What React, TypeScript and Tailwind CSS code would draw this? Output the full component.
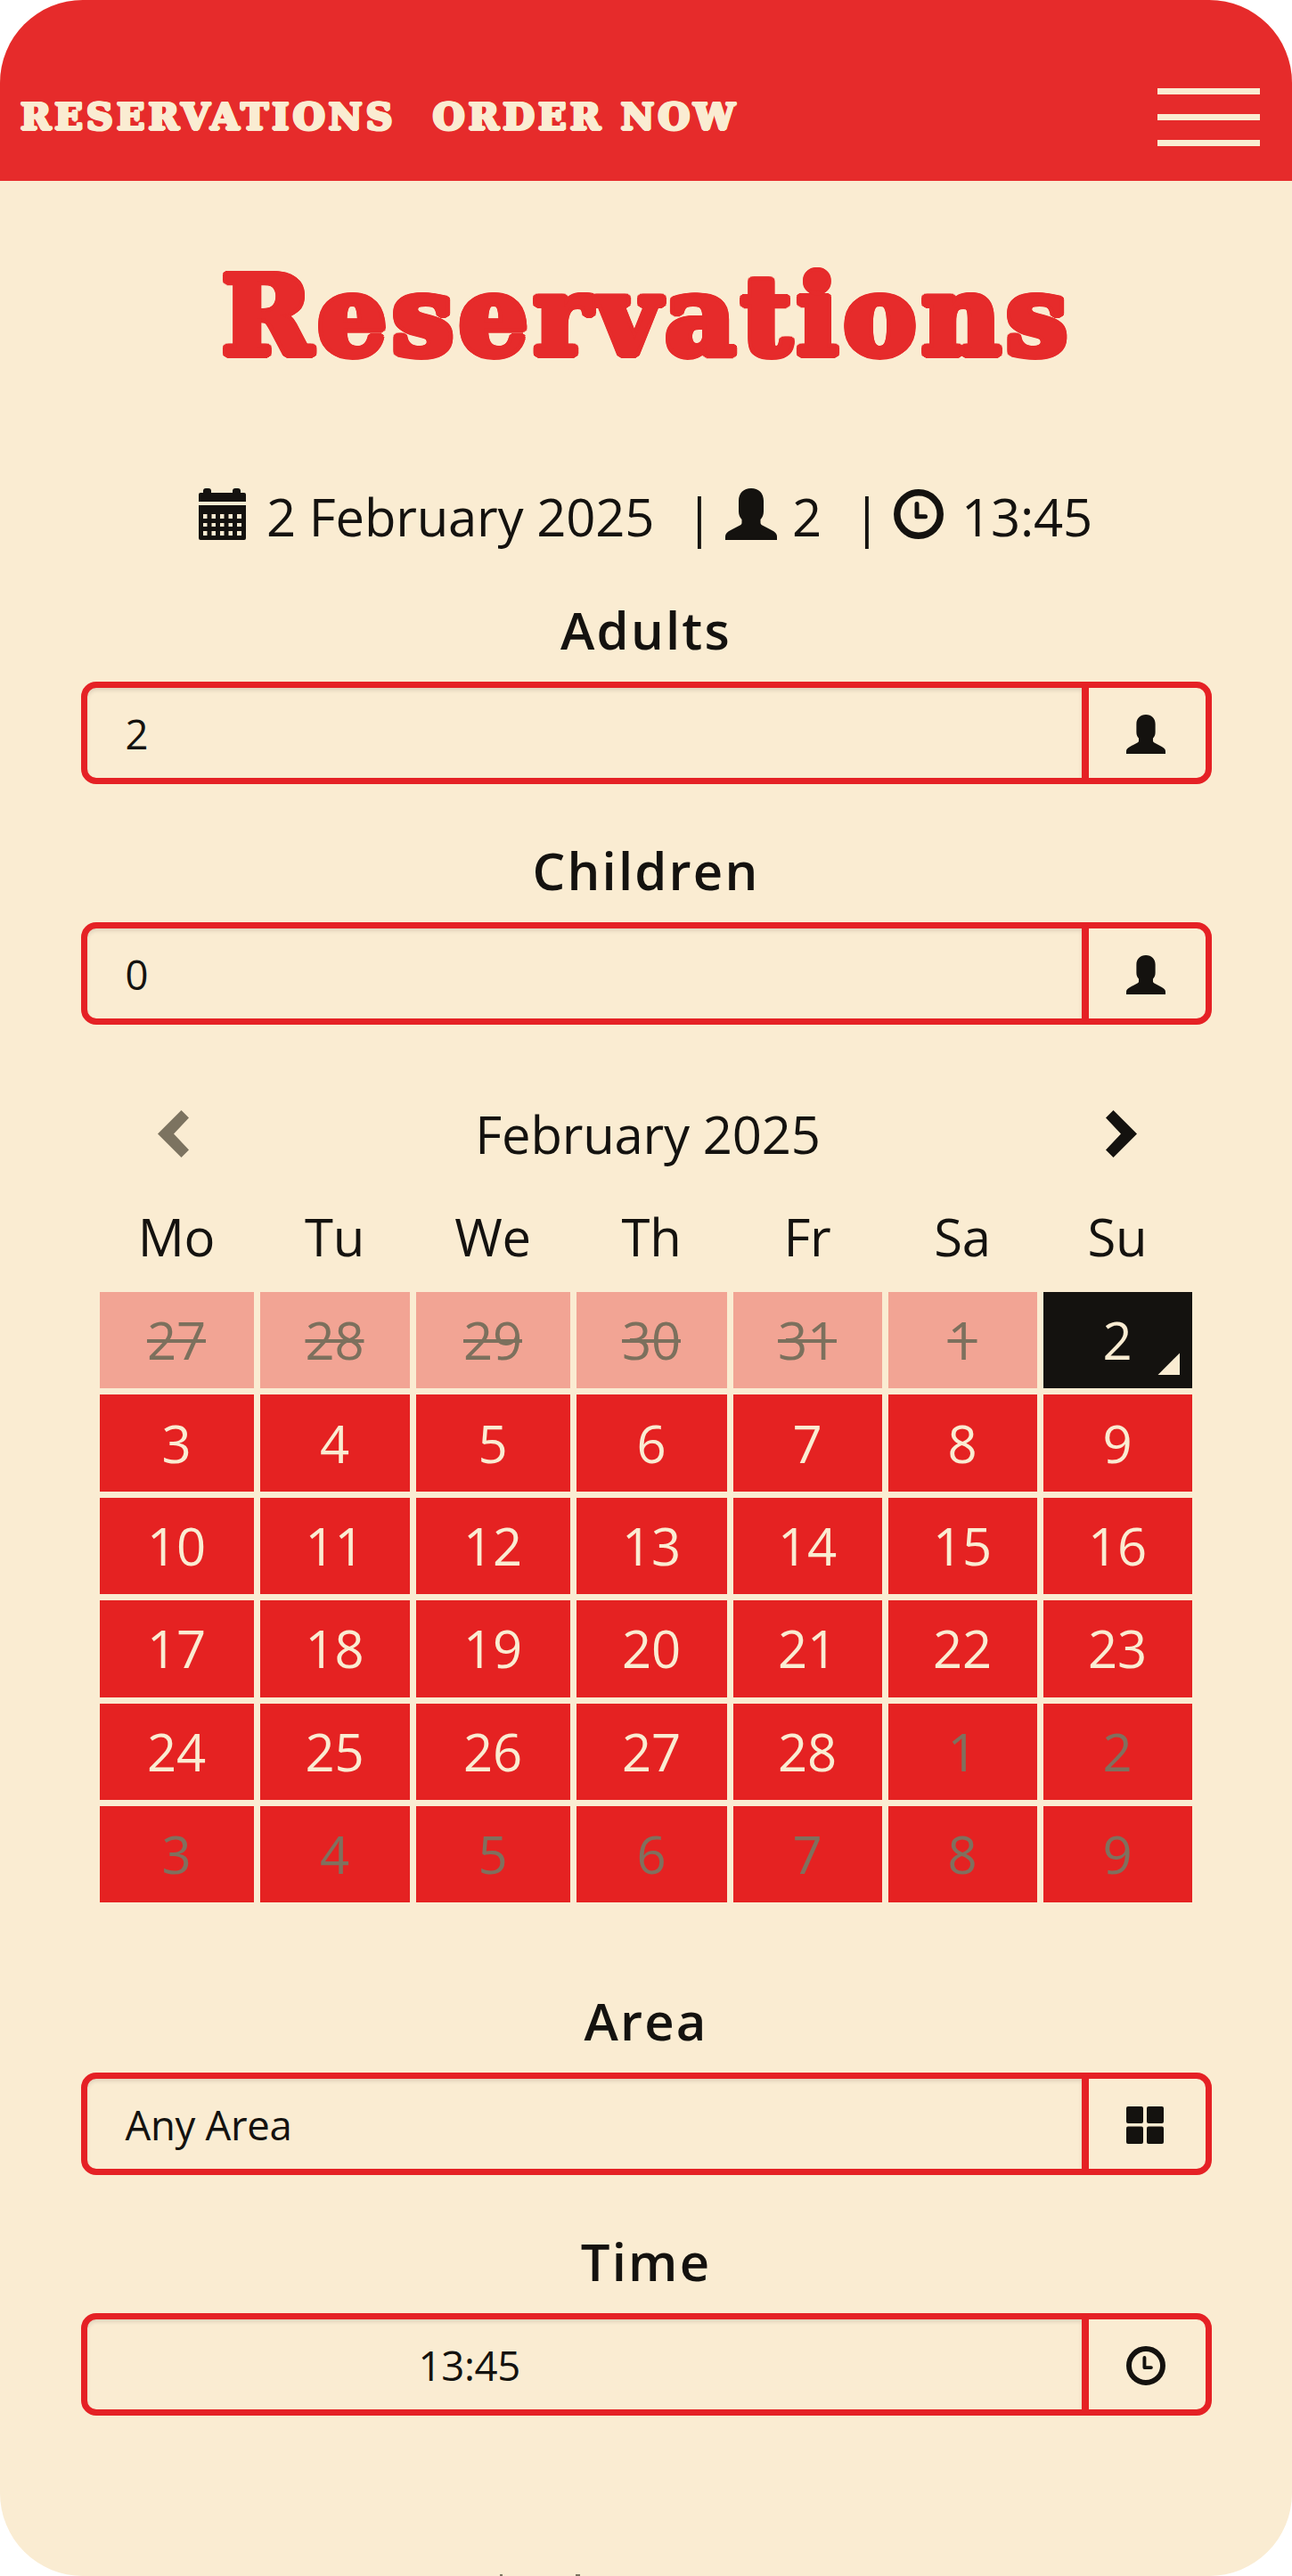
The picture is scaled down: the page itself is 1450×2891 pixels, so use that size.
import { ReactNode } from "react"

type IconProps = { className?: string }

const CalendarIcon = ({ className }: IconProps) => (
  <svg viewBox="0 0 53 58" className={className} fill="currentColor" fillRule="evenodd">
    <path d="M0 15V7a2 2 0 0 1 2-2h3V3a3 3 0 0 1 3-3h3a3 3 0 0 1 3 3v2h24V3a3 3 0 0 1 3-3h3a3 3 0 0 1 3 3v2h4a2 2 0 0 1 2 2v8z" />
    <path d="M0 19h53v37a2 2 0 0 1-2 2H2a2 2 0 0 1-2-2zM5 29v5h4.500v-5zm9.500 0v5h4.500v-5zm9.500 0v5h4.500v-5zm9.500 0v5h4.500v-5zm9.500 0v5h5v-5zM5 39v4h4.500v-4zm9.500 0v4h4.500v-4zm9.500 0v4h4.500v-4zm9.500 0v4h4.500v-4zm9.500 0v4h5v-4zM5 48v5h4.500v-5zm9.500 0v5h4.500v-5zm9.500 0v5h4.500v-5zm9.500 0v5h4.500v-5zm9.500 0v5h5v-5z" />
  </svg>
)

const UserIcon = ({ className }: IconProps) => (
  <svg viewBox="0 0 58 58" className={className} fill="currentColor">
    <path d="M29 0c8.500 0 14 5.500 14 14v12c0 4-1.500 7-3.500 9v3.500c0 1.500.7 2.300 2 3l10.500 5.500c4 2.200 6 4 6 7v4H0v-4c0-3 2-4.800 6-7l10.500-5.500c1.500-.8 2-1.500 2-3V35c-2-2-3.500-5-3.500-9V14C15 5.500 20.500 0 29 0z" />
  </svg>
)

const ClockIcon = ({ className }: IconProps) => (
  <svg viewBox="0 0 56 56" className={className} fill="none" stroke="currentColor">
    <circle cx="28" cy="28" r="24.200" strokeWidth="7.500" />
    <path d="M26 16.500v14.200h9.500" strokeWidth="5" strokeLinecap="round" strokeLinejoin="round" />
  </svg>
)

const GridIcon = ({ className }: IconProps) => (
  <svg viewBox="0 0 42 42" className={className} fill="currentColor">
    <rect width="19" height="19" rx="2" />
    <rect x="23" width="19" height="19" rx="2" />
    <rect y="22.500" width="19" height="19.500" rx="2" />
    <rect x="23" y="22.500" width="19" height="19.500" rx="2" />
  </svg>
)

const ChevronIcon = ({ className }: IconProps) => (
  <svg viewBox="0 0 35 53" className={className} fill="currentColor">
    <path d="M8.500 0 35 26.500 8.500 53 0 44.500 17 26.500 0 8.500z" />
  </svg>
)

type FieldProps = {
  label: string
  value: string
  icon: ReactNode
  valueClass?: string
}

const Field = ({ label, value, icon, valueClass = "pl-[43px]" }: FieldProps) => (
  <div className="w-[1269px] h-[209px] flex flex-col">
    <h2 className="h-[94px] leading-[71px] text-center text-[58px] font-semibold tracking-[2.200px]">{label}</h2>
    <div className="h-[115px] flex rounded-[17px] border-[7px] border-[#e52125] text-[45.500px] tracking-[-0.300px]">
      <div className={`flex-1 flex items-center pt-px rounded-l-[10px] shadow-[inset_0_3px_4px_rgba(0,0,0,0.1)] ${valueClass}`}>
        {value}
      </div>
      <div className="w-[139px] border-l-8 border-[#e52125] pl-[42px] pt-[3px] flex items-center">{icon}</div>
    </div>
  </div>
)

const weekDays = ["Mo", "Tu", "We", "Th", "Fr", "Sa", "Su"]

const weeks = [
  [27, 28, 29, 30, 31, 1, 2],
  [3, 4, 5, 6, 7, 8, 9],
  [10, 11, 12, 13, 14, 15, 16],
  [17, 18, 19, 20, 21, 22, 23],
  [24, 25, 26, 27, 28, 1, 2],
  [3, 4, 5, 6, 7, 8, 9],
]

const columns = "grid grid-cols-[173px_168px_173px_169px_167px_167px_167px] gap-x-[7px]"

const dayClass = (week: number, day: number) => {
  if (week === 0 && day === 6) return "bg-[#14120f] text-[#faecd2]"
  if (week === 0) return "bg-[#f2a494] text-[#7c705d] line-through decoration-[4px]"
  if (week === 5 || (week === 4 && day > 4)) return "bg-[#e52222] text-[#80705e]"
  return "bg-[#e52222] text-[#faecd2]"
}

const Calendar = () => (
  <div className="w-[1226px] text-[58px] tracking-[-0.200px]">
    <div className="h-[108px] flex items-center justify-between pl-[65px] pr-[62px]">
      <ChevronIcon className="w-[35px] h-[53px] rotate-180 text-[#7c7360]" />
      <span className="pl-px">February 2025</span>
      <ChevronIcon className="w-[35px] h-[53px]" />
    </div>
    <div className={`${columns} h-[124px] leading-[124px] text-center`}>
      {weekDays.map((day) => (
        <div key={day} className="pr-px">{day}</div>
      ))}
    </div>
    <div className="flex flex-col gap-[7px]">
      {weeks.map((week, w) => (
        <div key={w} className={columns}>
          {week.map((day, d) => (
            <div key={d} className={`relative h-[108.400px] pr-px pb-px flex items-center justify-center ${dayClass(w, d)}`}>
              {day}
              {w === 0 && d === 6 && (
                <span className="absolute right-[14px] bottom-[15px] size-[25px] bg-[#faecd2] [clip-path:polygon(100%_0,100%_100%,0_100%)]" />
              )}
            </div>
          ))}
        </div>
      ))}
    </div>
  </div>
)

const NavBar = () => (
  <header className="h-[203px] bg-[#e62b2b] text-[#faecd2] flex justify-between pl-[23px] pr-9">
    {/* the shadows fatten the serif and round off its corners */}
    <nav className="flex gap-[41px] pt-[105px] text-[41px] leading-[53px] font-bold font-['DejaVu_Serif',serif] tracking-[4.350px] [text-shadow:1.8px_0,-1.8px_0,0_1.5px,0_-1.5px,1.3px_1.3px,-1.3px_1.3px,1.3px_-1.3px,-1.3px_-1.3px]">
      <a>RESERVATIONS</a>
      <a>ORDER NOW</a>
    </nav>
    <button className="mt-[99px] w-[115px] h-[65px] flex flex-col justify-between">
      <span className="w-full h-[7px] bg-[#faecd2]" />
      <span className="w-full h-[7px] bg-[#faecd2]" />
      <span className="w-full h-[7px] bg-[#faecd2]" />
    </button>
  </header>
)

const App = () => {
  return (
    <div className="w-[1450px] h-[2891px] overflow-hidden rounded-[93px] bg-[#faecd2] text-[#14120f] font-['Open_Sans',sans-serif]">
      <NavBar />
      <main className="flex flex-col items-center">
        <h1 className="mt-[71px] pl-[3px] h-[160px] leading-[160px] text-[122px] font-bold font-['DejaVu_Serif',serif] text-[#e62b2b] tracking-[6.200px] [text-shadow:4.5px_0,-4.5px_0,0_4.5px,0_-4.5px,3.2px_3.2px,-3.2px_3.2px,3.2px_-3.2px,-3.2px_-3.2px,4.2px_1.7px,-4.2px_1.7px,4.2px_-1.7px,-4.2px_-1.7px,1.7px_4.2px,-1.7px_4.2px,1.7px_-4.2px,-1.7px_-4.2px]">
          Reservations
        </h1>

        {/* Booking summary */}
        <div className="mt-[106px] self-start ml-[223px] h-[80px] flex items-center text-[58px] leading-[80px] tracking-[-0.200px] whitespace-pre">
          <CalendarIcon className="w-[53px] h-[58px] mb-[6px]" />
          <span className="ml-[23px] w-[470px]">2 February 2025</span>
          <span className="w-[45px]">|</span>
          <UserIcon className="size-[58px] mb-[6px]" />
          <span className="ml-[17px] w-[68px]">2</span>
          <span className="w-[46px]">|</span>
          <ClockIcon className="size-[56px] mb-[6px]" />
          <span className="ml-[20px]">13:45</span>
        </div>

        <div className="mt-[51px] flex flex-col gap-[61px]">
          <Field label="Adults" value="2" icon={<UserIcon className="size-[44px]" />} />
          <Field label="Children" value="0" icon={<UserIcon className="size-[44px]" />} />
        </div>

        <div className="mt-[68px]">
          <Calendar />
        </div>

        <div className="mt-[97px] flex flex-col gap-[61px]">
          <Field label="Area" value="Any Area" icon={<GridIcon className="size-[42px]" />} />
          <Field label="Time" value="13:45" valueClass="pl-[372px]" icon={<ClockIcon className="size-[44px]" />} />
        </div>

        {/* Top edge of the content cut off below */}
        <div className="mt-[178px] w-full flex h-[2px]">
          <span className="ml-[561px] w-[3px] h-[2px] bg-[#7c7360]" />
          <span className="ml-[82px] w-[5px] h-[2px] bg-[#7c7360]" />
        </div>
      </main>
    </div>
  )
}

export default App
